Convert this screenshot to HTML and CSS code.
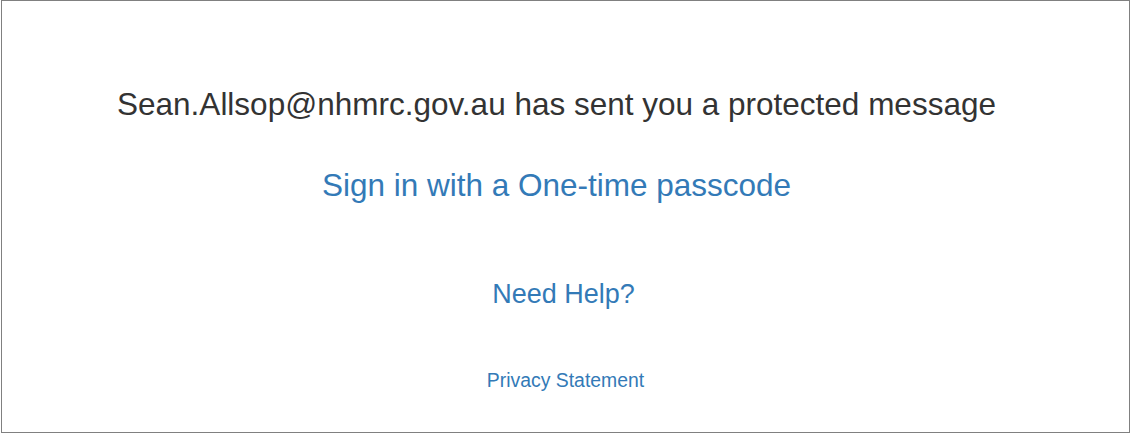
FILE: index.html
```html
<!DOCTYPE html>
<html lang="en">
<head>
    <meta charset="UTF-8">
    <meta name="viewport" content="width=device-width, initial-scale=1.0">
    <title>Protected Message</title>
    <link rel="stylesheet" href="styles.css">
</head>
<body>
    <main class="frame">
        <h1 class="sender">Sean.Allsop@nhmrc.gov.au has sent you a protected message</h1>
        <a class="otp" href="#">Sign in with a One-time passcode</a>
        <a class="help" href="#">Need Help?</a>
        <a class="privacy" href="#">Privacy Statement</a>
    </main>
</body>
</html>
```

FILE: styles.css
```css
body {
    font-family: "Liberation Sans", Arial, sans-serif;
    margin: 0;
    padding: 0;
    background-color: #fff;
}
.frame {
    box-sizing: border-box;
    width: 1129px;
    height: 433px;
    margin-left: 1px;
    border: 1px solid #808080;
    display: flex;
    flex-direction: column;
    align-items: center;
}
.sender {
    font-size: 31.5px;
    font-weight: normal;
    color: #333;
    margin: 85px 18px 0 0;
    line-height: 36px;
}
a {
    color: #337ab7;
    text-decoration: none;
}
.otp {
    font-size: 31.5px;
    line-height: 36px;
    margin: 45px 18px 0 0;
}
.help {
    font-size: 27px;
    line-height: 32px;
    margin: 75px 4px 0 0;
}
.privacy {
    font-size: 19.4px;
    line-height: 24px;
    margin-top: 58px;
}
```
